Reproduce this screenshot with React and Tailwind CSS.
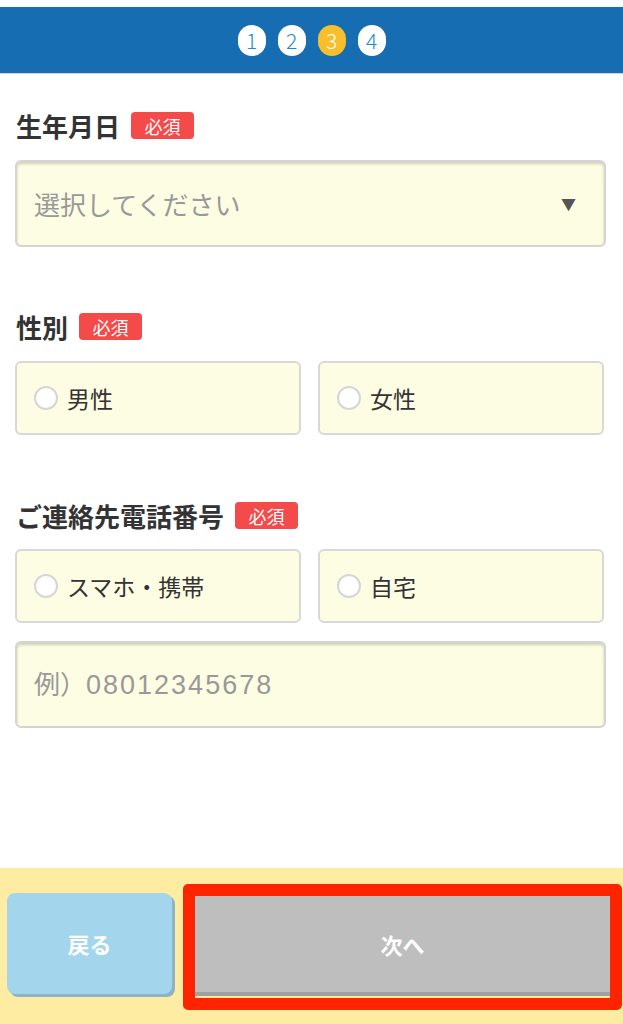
import { useState } from "react";

const font = { fontFamily: '"Noto Sans CJK JP", "Noto Sans", sans-serif' };

function Badge() {
  return (
    <span className="ml-[11px] inline-flex h-[27px] w-[63px] items-center justify-center rounded-[4px] bg-[#f54a4a] text-[18px] leading-none text-white">
      必須
    </span>
  );
}

function Label({ children }) {
  return (
    <div className="flex h-[27px] items-center">
      <span className="text-[26px] font-bold leading-none text-[#333]">{children}</span>
      <Badge />
    </div>
  );
}

function Radio({ label, checked, onClick }) {
  return (
    <button
      onClick={onClick}
      className="flex h-[74px] items-center rounded-[6px] border-2 border-[#d8d8d8] bg-[#fdfde3] pl-[17px] text-left"
    >
      <span className="flex h-[24px] w-[24px] items-center justify-center rounded-full border-2 border-[#d6d6d6] bg-white">
        {checked && <span className="h-[12px] w-[12px] rounded-full bg-[#1b8ad0]" />}
      </span>
      <span className="ml-[9px] text-[23px] leading-none text-[#333]">{label}</span>
    </button>
  );
}

export default function App() {
  const [gender, setGender] = useState(null);
  const [phoneType, setPhoneType] = useState(null);
  const steps = [1, 2, 3, 4];

  return (
    <div className="flex min-h-screen w-full flex-col bg-white" style={font}>
      {/* HEADER */}
      <div className="mt-[7px] flex h-[67px] items-center justify-center gap-[12px] border-b border-[#c9d3dc] bg-[#166db2]">
        {steps.map((n) => (
          <div
            key={n}
            className={`flex h-[31px] w-[28px] items-center justify-center rounded-full text-[21px] font-light leading-none ${
              n === 3 ? "bg-[#f6bf2b] text-white" : "bg-white text-[#1b8ad0]"
            }`}
          >
            {n}
          </div>
        ))}
      </div>

      {/* FORM */}
      <div className="flex flex-col pl-[15px] pr-[17px] pt-[38px]">
        <div className="pl-[1px]">
          <Label>生年月日</Label>
        </div>
        <div className="mt-[21px] flex h-[87px] items-center justify-between rounded-[6px] border-2 border-[#d4d4d4] bg-[#fdfde3] pl-[17px] pr-[28px] shadow-[inset_0_2px_3px_rgba(0,0,0,0.18)]">
          <span className="text-[26px] leading-none text-[#999]">選択してください</span>
          <span className="text-[15px] leading-none text-[#555]">▼</span>
        </div>

        <div className="mt-[66px] pl-[1px]">
          <Label>性別</Label>
        </div>
        <div className="mt-[21px] grid grid-cols-2 gap-[17px] pr-[2px]">
          <Radio label="男性" checked={gender === "m"} onClick={() => setGender("m")} />
          <Radio label="女性" checked={gender === "f"} onClick={() => setGender("f")} />
        </div>

        <div className="mt-[67px] pl-[1px]">
          <Label>ご連絡先電話番号</Label>
        </div>
        <div className="mt-[20px] grid grid-cols-2 gap-[17px] pr-[2px]">
          <Radio label="スマホ・携帯" checked={phoneType === "m"} onClick={() => setPhoneType("m")} />
          <Radio label="自宅" checked={phoneType === "h"} onClick={() => setPhoneType("h")} />
        </div>
        <div className="mt-[18px] flex h-[87px] items-center rounded-[6px] border-2 border-[#d4d4d4] bg-[#fdfde3] pl-[17px] shadow-[inset_0_2px_3px_rgba(0,0,0,0.18)]">
          <span className="text-[26px] leading-none text-[#999]">
            例）
            <span className="font-['Liberation_Sans',sans-serif] text-[27px] tracking-[2px]">08012345678</span>
          </span>
        </div>
      </div>

      {/* FOOTER */}
      <div className="mt-auto flex h-[156px] items-start gap-[8px] bg-[#ffeca3] pl-[7px] pr-[1px]">
        <button className="mt-[25px] flex h-[101px] w-[165px] items-center justify-center rounded-[8px] bg-[#a3d5ed] text-[22px] font-bold text-white shadow-[3px_3px_0_#8fb3c6]">
          戻る
        </button>
        <div className="ml-[3px] mt-[16px] flex-1 rounded-[5px] border-[12px] border-[#ff2400] pb-[6px]">
          <button className="flex h-[96px] w-full items-center justify-center bg-[#bebebe] text-[22px] font-bold text-white shadow-[0_4px_0_#a0a0a0]">
            次へ
          </button>
        </div>
      </div>
    </div>
  );
}
